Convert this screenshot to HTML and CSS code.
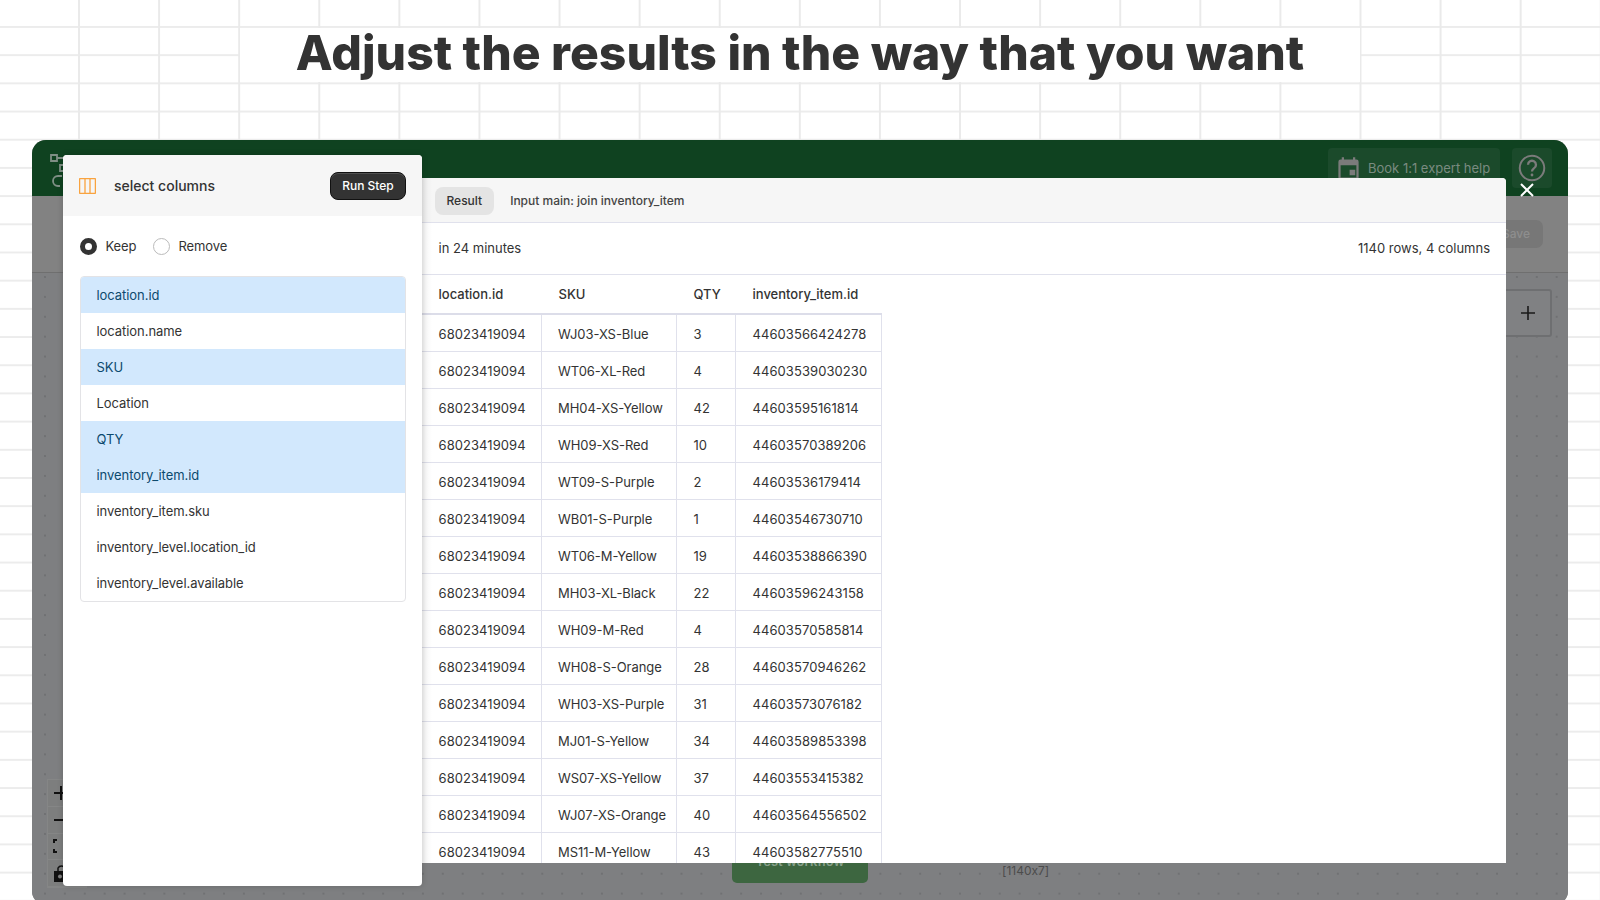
FILE: index.html
```html
<!DOCTYPE html>
<html lang="en">
<head>
<meta charset="utf-8">
<title>Adjust the results</title>
<link rel="stylesheet" href="styles.css">
</head>
<body>
<div class="page">
  <h1 class="headline">Adjust the results in the way that you want</h1>
  <div class="app">
    <header class="app-header">
      <svg class="logo" viewBox="0 0 24 40" width="24" height="40"><path d="M1 7h6v6H1zM7 10h6M10 17h6v6h-6zM10 38H8a5 5 0 0 1 0-10h4" fill="none" stroke="#7f8f85" stroke-width="1.8"/></svg>
      <div class="header-actions">
        <div class="expert-btn">
          <svg viewBox="0 0 24 24" width="27" height="27"><path d="M19 4h-1V2h-2v2H8V2H6v2H5a2 2 0 0 0-2 2v14a2 2 0 0 0 2 2h14a2 2 0 0 0 2-2V6a2 2 0 0 0-2-2zm0 16H5V9h14zM13 13h5v5h-5z" fill="#7b7b7b"/></svg>
          <span>Book 1:1 expert help</span>
        </div>
        <div class="help-btn">
          <svg viewBox="0 0 24 24" width="28" height="28" fill="none" stroke="#7b7b7b" stroke-width="1.7"><circle cx="12" cy="12" r="10.5"/><path d="M8.6 9.2a3.4 3.4 0 1 1 5.2 2.9c-1.2.8-1.8 1.5-1.8 2.9" stroke-width="2"/><circle cx="12" cy="18" r="1.2" fill="#7b7b7b" stroke="none"/></svg>
        </div>
      </div>
    </header>
    <div class="toolbar"><span class="save-btn">Save</span></div>
    <div class="canvas">
      <div class="add-btn"><svg viewBox="0 0 14 14" width="14" height="14" stroke="#1a1a1a" stroke-width="1.6"><path d="M7 0v14M0 7h14"/></svg></div>
      <div class="zoom-controls">
        <div class="zoom-cell"><svg viewBox="0 0 24 24" width="24" height="24" stroke="#111" stroke-width="2"><path d="M12 5v14M5 12h14"/></svg></div>
        <div class="zoom-cell"><svg viewBox="0 0 24 24" width="24" height="24" stroke="#111" stroke-width="2"><path d="M5 12h14"/></svg></div>
        <div class="zoom-cell"><svg viewBox="0 0 24 24" width="24" height="24" fill="none" stroke="#111" stroke-width="2"><path d="M8 6H5v3M5 15v3h3"/></svg></div>
        <div class="zoom-cell"><svg viewBox="0 0 24 24" width="24" height="24" fill="#111"><path d="M5 10h13v11H5z"/><circle cx="11" cy="15.5" r="2" fill="#808080"/><path d="M9 10V7a4 4 0 0 1 7 0" fill="none" stroke="#111" stroke-width="1.5"/></svg></div>
      </div>
      <div class="test-btn">Test workflow</div>
      <div class="row-count">[1140x7]</div>
    </div>
  </div>

  <section class="result-panel">
    <div class="tabs">
      <span class="tab tab-active">Result</span>
      <span class="tab">Input main: join inventory_item</span>
    </div>
    <div class="meta">
      <span>in 24 minutes</span>
      <span>1140 rows, 4 columns</span>
    </div>
    <table class="data">
      <thead>
        <tr><th class="c1">location.id</th><th class="c2">SKU</th><th class="c3">QTY</th><th class="c4">inventory_item.id</th></tr>
      </thead>
      <tbody>
        <tr><td>68023419094</td><td>WJ03-XS-Blue</td><td>3</td><td>44603566424278</td></tr>
        <tr><td>68023419094</td><td>WT06-XL-Red</td><td>4</td><td>44603539030230</td></tr>
        <tr><td>68023419094</td><td>MH04-XS-Yellow</td><td>42</td><td>44603595161814</td></tr>
        <tr><td>68023419094</td><td>WH09-XS-Red</td><td>10</td><td>44603570389206</td></tr>
        <tr><td>68023419094</td><td>WT09-S-Purple</td><td>2</td><td>44603536179414</td></tr>
        <tr><td>68023419094</td><td>WB01-S-Purple</td><td>1</td><td>44603546730710</td></tr>
        <tr><td>68023419094</td><td>WT06-M-Yellow</td><td>19</td><td>44603538866390</td></tr>
        <tr><td>68023419094</td><td>MH03-XL-Black</td><td>22</td><td>44603596243158</td></tr>
        <tr><td>68023419094</td><td>WH09-M-Red</td><td>4</td><td>44603570585814</td></tr>
        <tr><td>68023419094</td><td>WH08-S-Orange</td><td>28</td><td>44603570946262</td></tr>
        <tr><td>68023419094</td><td>WH03-XS-Purple</td><td>31</td><td>44603573076182</td></tr>
        <tr><td>68023419094</td><td>MJ01-S-Yellow</td><td>34</td><td>44603589853398</td></tr>
        <tr><td>68023419094</td><td>WS07-XS-Yellow</td><td>37</td><td>44603553415382</td></tr>
        <tr><td>68023419094</td><td>WJ07-XS-Orange</td><td>40</td><td>44603564556502</td></tr>
        <tr><td>68023419094</td><td>MS11-M-Yellow</td><td>43</td><td>44603582775510</td></tr>
      </tbody>
    </table>
  </section>

  <svg class="close-x" viewBox="0 0 14 14" width="14" height="14" stroke="#fff" stroke-width="2"><path d="M1 1l12 12M13 1L1 13"/></svg>

  <aside class="step-panel">
    <div class="step-head">
      <svg class="step-icon" viewBox="0 0 17 16" width="17" height="16" fill="none" stroke="#f9a33f" stroke-width="1.3"><rect x=".6" y=".6" width="15.8" height="14.8" rx=".5"/><path d="M6 .5v15M11 .5v15"/></svg>
      <span class="step-title">select columns</span>
      <span class="run-btn">Run Step</span>
    </div>
    <div class="step-body">
      <div class="radios">
        <span class="radio radio-on"></span><span class="radio-label">Keep</span>
        <span class="radio"></span><span class="radio-label">Remove</span>
      </div>
      <ul class="columns">
        <li class="sel">location.id</li>
        <li>location.name</li>
        <li class="sel">SKU</li>
        <li>Location</li>
        <li class="sel">QTY</li>
        <li class="sel">inventory_item.id</li>
        <li>inventory_item.sku</li>
        <li>inventory_level.location_id</li>
        <li>inventory_level.available</li>
      </ul>
    </div>
  </aside>
</div>
</body>
</html>
```

FILE: styles.css
```css
* { box-sizing: border-box; }
html, body { margin: 0; padding: 0; }
body {
  font-family: Inter, "Liberation Sans", sans-serif;
  font-variant-ligatures: no-contextual;
  color: #333;
}

.page {
  position: relative;
  width: 1600px;
  height: 900px;
  overflow: hidden;
  padding-top: 28px;
  background-color: #fff;
  background-image:
    linear-gradient(to right, #eaeaea 2px, transparent 2px),
    linear-gradient(to bottom, #ececec 2px, transparent 2px);
  background-size: 80.1px 28.2px;
  background-position: 78px -2.2px;
}

.headline {
  margin: 0 240px;
  width: 1120px;
  height: 54px;
  padding-top: 1px;
  background: #fff;
  font-size: 48.1px;
  font-weight: 800;
  line-height: 48px;
  text-align: center;
  color: #333;
}

.app {
  display: flex;
  flex-direction: column;
  margin: 58px 32px 0;
  height: 765px;
  border-radius: 14px;
  overflow: hidden;
  background: #808080;
}

.app-header {
  display: flex;
  align-items: flex-start;
  justify-content: space-between;
  flex: 0 0 56px;
  padding: 8px 16px 0 18px;
  background: #0f4220;
}
.logo { display: block; }
.header-actions { display: flex; gap: 12px; }
.expert-btn {
  display: flex;
  align-items: center;
  gap: 6px;
  width: 172px;
  height: 40px;
  padding-left: 7px;
  border-radius: 4px;
  background: #1b4a2b;
  color: #7a8b80;
  font-size: 13px;
}
.help-btn {
  display: flex;
  align-items: center;
  justify-content: center;
  width: 40px;
  height: 40px;
  border-radius: 4px;
  background: #1b4a2b;
}

.toolbar {
  display: flex;
  align-items: center;
  justify-content: flex-end;
  flex: 0 0 77px;
  padding: 0 25px 0 0;
  background: #828282;
  border-bottom: 1px solid #6f6f6f;
}
.save-btn {
  width: 66px;
  height: 28px;
  padding-right: 13px;
  border-radius: 7px;
  background: #777;
  color: #8e8e8e;
  font-size: 12px;
  font-weight: 500;
  line-height: 28px;
  text-align: right;
}

.canvas {
  position: relative;
  flex: 1;
  background-color: #7e7f81;
  background-image: radial-gradient(circle at 1px 1px, #707173 0.7px, transparent 1px);
  background-size: 19.9px 19.9px;
  background-position: 12px 3px;
}
.add-btn {
  position: absolute;
  top: 16px;
  right: 16px;
  display: flex;
  align-items: center;
  justify-content: flex-end;
  width: 56px;
  height: 48px;
  padding-right: 15px;
  border: 2px solid #6e6f71;
  border-radius: 3px;
  background: #808183;
}
.zoom-controls {
  position: absolute;
  left: 15px;
  top: 506px;
  width: 40px;
  background: #7d7e7e;
  border: 1px solid #858686;
}
.zoom-cell {
  display: flex;
  align-items: center;
  height: 26.75px;
  padding-left: 1px;
  border-bottom: 1px solid #858686;
}
.test-btn {
  position: absolute;
  left: 700px;
  top: 570px;
  width: 136px;
  height: 40px;
  padding-top: 10px;
  border-radius: 5px;
  background: #3d6640;
  color: #87a08a;
  font-size: 13px;
  font-weight: 600;
  text-align: center;
}
.row-count {
  position: absolute;
  left: 970px;
  top: 590px;
  color: #4c4c4c;
  font-size: 12px;
}

.result-panel {
  position: absolute;
  left: 422px;
  top: 178px;
  width: 1084px;
  height: 685px;
  overflow: hidden;
  background: #fff;
  border-radius: 0 4px 0 0;
}
.result-panel::before {
  content: "";
  position: absolute;
  left: 0;
  top: 0;
  bottom: 0;
  width: 10px;
  background: linear-gradient(to right, rgba(0,0,0,.05), transparent);
}
.tabs {
  display: flex;
  align-items: center;
  gap: 4px;
  height: 45px;
  padding-left: 12.5px;
  padding-top: 1px;
  background: #f6f6f6;
  border-bottom: 1px solid #e0e1ec;
}
.tab {
  padding: 0 12px;
  height: 28px;
  border-radius: 8px;
  font-size: 12px;
  font-weight: 500;
  line-height: 28px;
  color: #444;
}
.tab-active { background: #e4e4e4; color: #333; }
.meta {
  display: flex;
  align-items: center;
  justify-content: space-between;
  height: 52px;
  padding: 0 16px 2px 16.5px;
  border-bottom: 1px solid #e0e1ec;
  font-size: 13px;
  color: #333;
}
.data {
  border-collapse: separate;
  border-spacing: 0;
  table-layout: fixed;
  width: 460px;
  font-size: 13px;
}
.data th {
  height: 40px;
  padding: 0 0 0 16.5px;
  font-weight: 500;
  text-align: left;
  color: #333;
  border-bottom: 2px solid #dcdde9;
}
.data td {
  height: 37px;
  padding: 1px 0 0 16.5px;
  color: #333;
  white-space: nowrap;
  border-right: 1px solid #e0e1ec;
  border-bottom: 1px solid #e0e1ec;
}
.data td:nth-child(1), .data td:nth-child(4) { letter-spacing: .07px; }
.data td:nth-child(2) { letter-spacing: -.05px; padding-left: 16px; }
.c1 { width: 120px; }
.c2 { width: 135px; }
.c3 { width: 59px; }
.c4 { width: 146px; }

.close-x {
  position: absolute;
  left: 1520px;
  top: 183px;
}

.step-panel {
  position: absolute;
  left: 63px;
  top: 155px;
  width: 359px;
  height: 731px;
  background: #fff;
  border-radius: 4px;
  box-shadow: 0 0 6px rgba(0,0,0,.18);
}
.step-head {
  display: flex;
  align-items: center;
  height: 61px;
  padding: 0 16px;
  background: #f6f6f6;
  border-radius: 4px 4px 0 0;
}
.step-icon { display: block; margin-right: 18px; }
.step-title {
  flex: 1;
  font-size: 14px;
  font-weight: 500;
  color: #333;
}
.run-btn {
  width: 76px;
  height: 28px;
  border: 1px solid #111;
  border-radius: 8px;
  background: #333;
  box-shadow: inset 0 1px 0 rgba(255,255,255,.15);
  color: #fff;
  font-size: 12px;
  font-weight: 500;
  line-height: 25px;
  text-align: center;
}
.step-body { padding: 0 16px 0 16.5px; }
.radios {
  display: flex;
  align-items: center;
  height: 60px;
  font-size: 13px;
  color: #333;
}
.radio {
  flex: none;
  width: 17px;
  height: 17px;
  margin-right: 9px;
  border: 1px solid #bbb;
  border-radius: 50%;
  background: #fff;
}
.radio + .radio-label + .radio { margin-right: 8px; }
.radio-on { border: 5px solid #333; }
.radio-label { margin-right: 17px; letter-spacing: -.1px; }
.columns {
  margin: 0;
  padding: 0;
  width: 326px;
  list-style: none;
  border: 1px solid #e3e3e6;
  border-radius: 4px;
  overflow: hidden;
}
.columns li {
  height: 36px;
  padding-left: 16px;
  font-size: 13px;
  letter-spacing: -.06px;
  line-height: 36px;
  color: #333;
}
.columns li.sel { background: #d2e8fd; color: #0c4a6e; }
```
